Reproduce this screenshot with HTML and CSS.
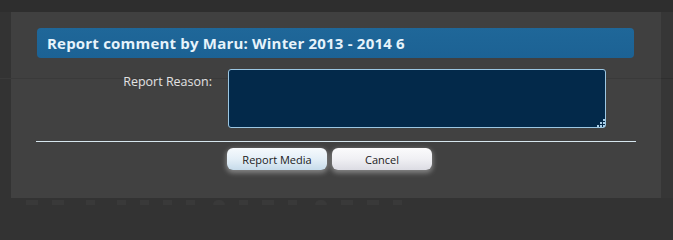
FILE: index.html
```html
<!DOCTYPE html>
<html>
<head>
<meta charset="utf-8">
<link rel="stylesheet" href="styles.css">
</head>
<body>
<div class="top-band"></div>
<div class="row">
  <div class="gutter-left"></div>
  <div class="dialog">
    <div class="header">Report comment by Maru: Winter 2013 - 2014 6</div>
    <div class="form-row">
      <label class="label" for="reason">Report Reason:</label>
      <div class="field">
        <textarea id="reason" class="textarea"></textarea>
        <svg class="grip" width="9" height="9" viewBox="0 0 9 9">
          <rect x="7" y="1" width="2" height="2" fill="#a9cde6"/>
          <rect x="7" y="4" width="2" height="2" fill="#a9cde6"/>
          <rect x="4" y="4" width="2" height="2" fill="#a9cde6"/>
          <rect x="7" y="7" width="2" height="2" fill="#a9cde6"/>
          <rect x="4" y="7" width="2" height="2" fill="#a9cde6"/>
          <rect x="1" y="7" width="2" height="2" fill="#a9cde6"/>
        </svg>
      </div>
    </div>
    <div class="divider"></div>
    <div class="buttons">
      <button class="btn btn-primary">Report Media</button>
      <button class="btn btn-cancel">Cancel</button>
    </div>
  </div>
  <div class="gutter-right"></div>
</div>
<div class="toolbar">
  <span class="tb-icon w10"></span>
  <span class="tb-icon w10"></span>
  <span class="tb-icon w8 gap-l"></span>
  <span class="tb-icon w8 gap-l"></span>
  <span class="tb-icon w8"></span>
  <span class="tb-icon w8"></span>
  <span class="tb-icon w8"></span>
  <span class="tb-icon round gap-s"></span>
  <span class="tb-icon w8"></span>
  <span class="tb-icon w10"></span>
  <span class="tb-icon w8"></span>
  <span class="tb-icon round gap-s"></span>
  <span class="tb-icon w10"></span>
  <span class="tb-icon w10"></span>
  <span class="tb-icon w8"></span>
</div>
</body>
</html>
```

FILE: styles.css
```css
html, body {
  margin: 0;
  padding: 0;
}

body {
  width: 673px;
  height: 206px;
  overflow: hidden;
  background: #333333;
  font-family: "Open Sans", "Noto Sans", "Liberation Sans", sans-serif;
}

.top-band {
  height: 12px;
  background: #2e2e2e;
}

.row {
  display: flex;
  height: 186px;
}

.gutter-left {
  width: 11px;
  background: linear-gradient(#333333 66px, #3a3a3a 66px, #3a3a3a 67px, #333333 67px);
}

.gutter-right {
  flex: 1;
  background: linear-gradient(#363636 66px, #2f2f2f 66px, #2f2f2f 67px, #363636 67px);
}

.dialog {
  width: 650px;
  box-sizing: border-box;
  padding-top: 16px;
  background: linear-gradient(#404040 66px, #3a3a3a 66px, #3a3a3a 67px, #414141 67px);
}

.header {
  margin-left: 26px;
  width: 597px;
  height: 30px;
  box-sizing: border-box;
  padding-left: 10px;
  border-radius: 4px;
  background: linear-gradient(#1f6799, #1c6294);
  color: #e6f3fb;
  font-family: "Open Sans", "DejaVu Sans", sans-serif;
  font-weight: 700;
  font-size: 15px;
  letter-spacing: 0.2px;
  line-height: 30px;
  white-space: nowrap;
}

.form-row {
  display: grid;
  grid-template-columns: 201px 378px;
  column-gap: 16px;
  margin-top: 11px;
}

.label {
  text-align: right;
  padding-top: 5px;
  color: #e2e2e2;
  font-size: 12.5px;
  line-height: 16px;
}

.field {
  position: relative;
  height: 59px;
}

.textarea {
  display: block;
  width: 378px;
  height: 59px;
  box-sizing: border-box;
  margin: 0;
  border: 1px solid #9cc7e3;
  border-radius: 3px;
  background: #03294a;
  color: #ffffff;
  resize: none;
  outline: none;
}

.grip {
  position: absolute;
  right: 1px;
  bottom: 1px;
}

.divider {
  margin-top: 13px;
  margin-left: 25px;
  width: 600px;
  height: 1px;
  background: #d6e6ee;
}

.buttons {
  display: flex;
  gap: 5px;
  margin-top: 6px;
  padding-left: 216px;
}

.btn {
  width: 100px;
  height: 22px;
  padding: 0;
  border: none;
  border-radius: 6px;
  font-family: "Open Sans", "Noto Sans", sans-serif;
  font-size: 11px;
  color: #1a1a1a;
  box-shadow: 0 2px 5px 1px rgba(255, 255, 255, 0.35);
}

.btn-primary {
  background: linear-gradient(#f6fafd, #e4eff7 50%, #c6dbea);
}

.btn-cancel {
  background: linear-gradient(#fbfbfc, #f0f0f4 50%, #dcdce3);
}

.toolbar {
  display: flex;
  align-items: flex-start;
  gap: 14px;
  height: 8px;
  padding-left: 26px;
  padding-top: 2px;
  background: #333333;
}

.tb-icon {
  display: block;
  height: 5px;
  background: #393939;
}

.w10 { width: 12px; }
.w8 { width: 9px; }
.round { width: 12px; border-radius: 6px 6px 0 0; }
.gap-l { margin-left: 8px; }
.gap-s { margin-left: 4px; }
```
